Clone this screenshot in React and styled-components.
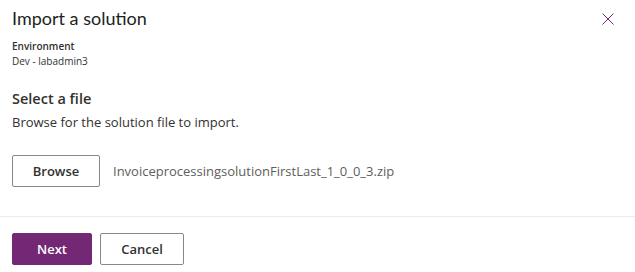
import React from "react";
import styled, { createGlobalStyle } from "styled-components";

const Global = createGlobalStyle`
  html, body {
    margin: 0;
    padding: 0;
    background: #ffffff;
  }
  body {
    font-family: "Segoe UI", "Open Sans", "Noto Sans", sans-serif;
    color: #323130;
  }
`;

const Panel = styled.div`
  width: 635px;
  height: 272px;
  display: flex;
  flex-direction: column;
  background: #ffffff;
  box-sizing: border-box;
`;

const Header = styled.div`
  display: flex;
  justify-content: space-between;
  align-items: flex-start;
  padding: 4px 21px 0 12px;
`;

// Segoe UI is not around, Lato gets the title width closest
const Title = styled.h1`
  margin: 0;
  font-family: "Segoe UI", Lato, "Open Sans", sans-serif;
  font-size: 18px;
  font-weight: 400;
  line-height: 29px;
  color: #201f1e;
`;

const Close = styled.button`
  width: 12px;
  height: 12px;
  margin-top: 9px;
  padding: 0;
  border: none;
  background: transparent;
  display: flex;
  cursor: pointer;
`;

const Body = styled.div`
  flex: 1;
  padding: 0 12px;
  display: flex;
  flex-direction: column;
`;

const Meta = styled.div`
  display: flex;
  flex-direction: column;
  margin-top: 6px;
  font-size: 10px;
  line-height: 15px;
`;

const MetaLabel = styled.span`
  font-weight: 600;
  color: #323130;
`;

const MetaValue = styled.span`
  color: #323130;
`;

const SectionTitle = styled.h2`
  margin: 20px 0 0;
  font-size: 14.5px;
  font-weight: 600;
  line-height: 20px;
  color: #323130;
`;

const Hint = styled.p`
  margin: 4px 0 0;
  font-size: 13px;
  line-height: 18px;
  color: #323130;
`;

const FileRow = styled.div`
  display: flex;
  align-items: center;
  gap: 13px;
  margin-top: 24px;
`;

const Button = styled.button`
  box-sizing: border-box;
  width: ${p => p.$width};
  height: 32px;
  padding: 0;
  border-radius: 2px;
  border: 1px solid ${p => (p.$primary ? "#742774" : "#8a8886")};
  background: ${p => (p.$primary ? "#742774" : "#ffffff")};
  color: ${p => (p.$primary ? "#ffffff" : "#323130")};
  font-family: inherit;
  font-size: 13px;
  font-weight: 600;
  cursor: pointer;
`;

const FileName = styled.span`
  font-size: 13px;
  color: #605e5c;
`;

const Footer = styled.div`
  border-top: 1px solid #edebe9;
  padding: 16px 12px 7px;
  display: flex;
  gap: 8px;
`;

export default function App() {
  return (
    <>
      <Global />
      <Panel>
        <Header>
          <Title>Import a solution</Title>
          <Close aria-label="Close">
            <svg width="12" height="12" viewBox="0 0 12 12">
              <path d="M0.5 0.5 L11.5 11.5 M11.5 0.5 L0.5 11.5" stroke="#742774" strokeWidth="1" fill="none" />
            </svg>
          </Close>
        </Header>
        <Body>
          <Meta>
            <MetaLabel>Environment</MetaLabel>
            <MetaValue>Dev - labadmin3</MetaValue>
          </Meta>
          <SectionTitle>Select a file</SectionTitle>
          <Hint>Browse for the solution file to import.</Hint>
          <FileRow>
            <Button $width="88px">Browse</Button>
            <FileName>InvoiceprocessingsolutionFirstLast_1_0_0_3.zip</FileName>
          </FileRow>
        </Body>
        <Footer>
          <Button $primary $width="80px">Next</Button>
          <Button $width="84px">Cancel</Button>
        </Footer>
      </Panel>
    </>
  );
}
